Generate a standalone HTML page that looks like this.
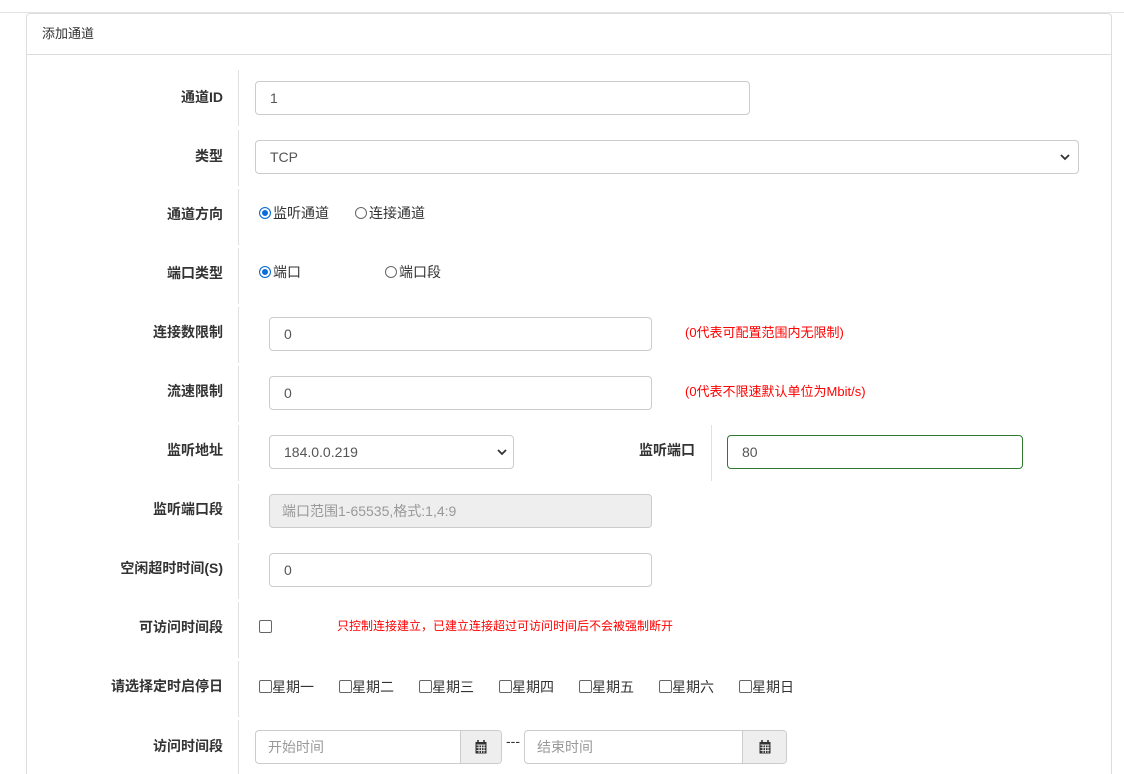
<!DOCTYPE html><html style="overflow:hidden;height:774px"><head><meta charset="utf-8"><style>
html,body{overflow:hidden}
body{margin:0;width:1124px;height:774px;background:#fff;font-family:"Liberation Sans","Noto Sans CJK SC",sans-serif;font-size:13px;color:#333;position:relative;overflow:hidden}
.a{position:absolute}
.top{left:0;top:12px;width:1124px;height:1px;background:#e3e3e3}
.card{left:26px;top:13px;width:1084px;height:780px;border:1px solid #ddd;border-radius:4px}
.hd{left:26px;top:54px;width:1085px;height:1px;background:#ddd}
.lb{width:200px;text-align:right;font-weight:bold;color:#333;line-height:20px;font-size:14px}
.dv{left:238px;width:1px;height:56px;background:#e0e0e0}
.in{border:1px solid #ccc;border-radius:4px;box-sizing:border-box;height:34px;padding-left:14px;line-height:32px;font-size:14px;color:#555;background:#fff}
.ph{color:#999}
.red{color:#f00;font-size:13px;line-height:16px}
.rd{display:inline-block;width:12px;height:12px;border:1px solid #666;border-radius:50%;box-sizing:border-box;vertical-align:-1px;margin-right:2px}
.rd.on{border:1px solid #0a6cdb;box-shadow:inset 0 0 0 2px #fff;background:#0a6cdb}
.cb{display:inline-block;width:13px;height:13px;border:1px solid #666;border-radius:2px;box-sizing:border-box;vertical-align:-1px}
.t{line-height:20px;color:#333;font-size:14px}
.ad{border-left:1px solid #ccc;background:#eee;border-radius:0 4px 4px 0;position:absolute;right:0;top:0;bottom:0;width:40px}
.ad svg{position:absolute;left:50%;top:50%;margin:-7px 0 0 -6px}
</style></head><body>
<div class="a top"></div>
<div class="a card"></div>
<div class="a hd"></div>
<div class="a t" style="left:42px;top:24px;font-size:13px">添加通道</div>

<div class="a dv" style="top:70px"></div><div class="a dv" style="top:130px"></div><div class="a dv" style="top:189px"></div><div class="a dv" style="top:248px"></div><div class="a dv" style="top:307px"></div><div class="a dv" style="top:366px"></div><div class="a dv" style="top:425px"></div><div class="a dv" style="top:484px"></div><div class="a dv" style="top:543px"></div><div class="a dv" style="top:602px"></div><div class="a dv" style="top:661px"></div><div class="a dv" style="top:720px"></div>
<div class="a dv" style="left:711px;top:425px"></div>

<div class="a lb" style="left:23px;top:87px">通道ID</div>
<div class="a lb" style="left:23px;top:146px">类型</div>
<div class="a lb" style="left:23px;top:204px">通道方向</div>
<div class="a lb" style="left:23px;top:263px">端口类型</div>
<div class="a lb" style="left:23px;top:322px">连接数限制</div>
<div class="a lb" style="left:23px;top:381px">流速限制</div>
<div class="a lb" style="left:23px;top:440px">监听地址</div>
<div class="a lb" style="left:495px;top:440px">监听端口</div>
<div class="a lb" style="left:23px;top:499px">监听端口段</div>
<div class="a lb" style="left:23px;top:558px">空闲超时时间(S)</div>
<div class="a lb" style="left:23px;top:617px">可访问时间段</div>
<div class="a lb" style="left:23px;top:676px">请选择定时启停日</div>
<div class="a lb" style="left:23px;top:736px">访问时间段</div>

<div class="a in" style="left:255px;top:81px;width:495px">1</div>
<div class="a in" style="left:255px;top:140px;width:824px">TCP<svg class="a" style="right:8px;top:12px" width="10" height="8" viewBox="0 0 10 8"><path d="M1 2l4 4 4-4" stroke="#333" stroke-width="1.8" fill="none"/></svg></div>
<div class="a t" style="left:259px;top:203px"><span class="rd on"></span>监听通道</div>
<div class="a t" style="left:355px;top:203px"><span class="rd"></span>连接通道</div>
<div class="a t" style="left:259px;top:262px"><span class="rd on"></span>端口</div>
<div class="a t" style="left:385px;top:262px"><span class="rd"></span>端口段</div>
<div class="a in" style="left:269px;top:317px;width:383px">0</div>
<div class="a red" style="left:685px;top:325px">(0代表可配置范围内无限制)</div>
<div class="a in" style="left:269px;top:376px;width:383px">0</div>
<div class="a red" style="left:685px;top:384px">(0代表不限速默认单位为Mbit/s)</div>
<div class="a in" style="left:269px;top:435px;width:245px">184.0.0.219<svg class="a" style="right:6px;top:12px" width="10" height="8" viewBox="0 0 10 8"><path d="M1 2l4 4 4-4" stroke="#333" stroke-width="1.8" fill="none"/></svg></div>
<div class="a in" style="left:727px;top:435px;width:296px;border-color:#2d7a2d">80</div>
<div class="a in ph" style="left:269px;top:494px;width:383px;background:#eee;padding-left:12px">端口范围1-65535,格式:1,4:9</div>
<div class="a in" style="left:269px;top:553px;width:383px">0</div>
<div class="a" style="left:259px;top:620px"><span class="cb"></span></div>
<div class="a red" style="left:337px;top:618px;font-size:12px">只控制连接建立，已建立连接超过可访问时间后不会被强制断开</div>
<div class="a t" style="left:259px;top:677px"><span class="cb"></span>星期一</div>
<div class="a t" style="left:339px;top:677px"><span class="cb"></span>星期二</div>
<div class="a t" style="left:419px;top:677px"><span class="cb"></span>星期三</div>
<div class="a t" style="left:499px;top:677px"><span class="cb"></span>星期四</div>
<div class="a t" style="left:579px;top:677px"><span class="cb"></span>星期五</div>
<div class="a t" style="left:659px;top:677px"><span class="cb"></span>星期六</div>
<div class="a t" style="left:739px;top:677px"><span class="cb"></span>星期日</div>
<div class="a in ph" style="left:255px;top:730px;width:247px;padding-left:12px">开始时间<div class="ad"><svg width="12" height="14" viewBox="0 0 12 14"><rect x="0.5" y="2" width="11" height="11.5" fill="#333"/><path d="M3 0v3M9 0v3" stroke="#333" stroke-width="1.6"/><path d="M1.5 5h9M1.5 7.7h9M1.5 10.4h9M4 5v8M6.5 5v8M9 5v8" stroke="#eee" stroke-width="0.9"/></svg></div></div>
<div class="a t" style="left:506px;top:731px">---</div>
<div class="a in ph" style="left:524px;top:730px;width:263px;padding-left:12px">结束时间<div class="ad" style="width:43px"><svg width="12" height="14" viewBox="0 0 12 14"><rect x="0.5" y="2" width="11" height="11.5" fill="#333"/><path d="M3 0v3M9 0v3" stroke="#333" stroke-width="1.6"/><path d="M1.5 5h9M1.5 7.7h9M1.5 10.4h9M4 5v8M6.5 5v8M9 5v8" stroke="#eee" stroke-width="0.9"/></svg></div></div>
</body></html>
